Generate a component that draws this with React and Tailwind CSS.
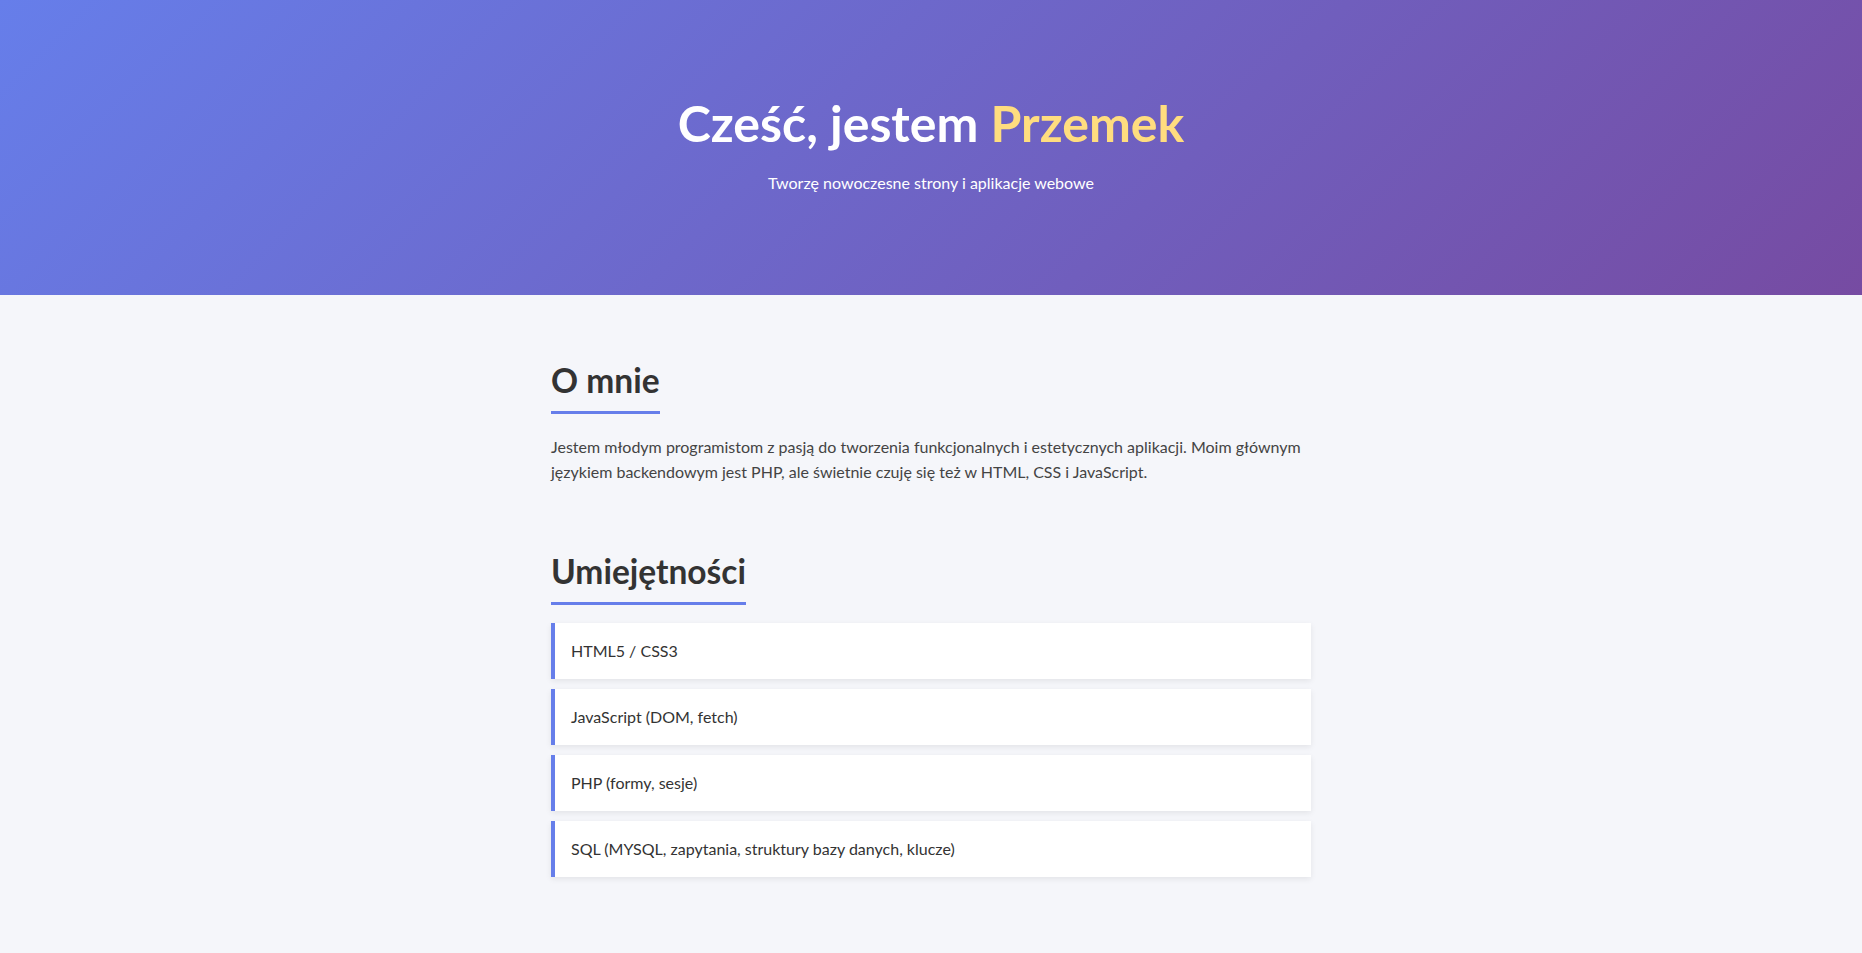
import React from "react";

const skills = [
  "HTML5 / CSS3",
  "JavaScript (DOM, fetch)",
  "PHP (formy, sesje)",
  "SQL (MYSQL, zapytania, struktury bazy danych, klucze)",
];

export default function App() {
  return (
    <div className="min-h-screen bg-[#f5f6fa] font-['Lato','Noto_Sans',sans-serif] text-[#333]">
      {/* Header */}
      <header className="h-[295px] flex flex-col items-center justify-center bg-[linear-gradient(135deg,#667eea_0%,#764ba2_100%)] text-white pb-[8px]">
        <h1 className="text-[50px] font-bold leading-tight">
          Cześć, jestem <span className="text-[#ffdd7f]">Przemek</span>
        </h1>
        <p className="mt-[17px] text-[16px]">Tworzę nowoczesne strony i aplikacje webowe</p>
      </header>

      <main className="max-w-[800px] mx-auto px-5 pt-[65px] pb-16">
        {/* O mnie */}
        <section className="mb-[66px]">
          <h2 className="inline-block text-[33.5px] font-bold leading-tight pb-[9px] border-b-[3px] border-[#667eea]">
            O mnie
          </h2>
          <p className="mt-[20px] text-[16px] leading-[1.6] text-[#444]">
            Jestem młodym programistom z pasją do tworzenia funkcjonalnych i estetycznych aplikacji. Moim głównym
            językiem backendowym jest PHP, ale świetnie czuję się też w HTML, CSS i JavaScript.
          </p>
        </section>

        {/* Umiejętności */}
        <section>
          <h2 className="inline-block text-[33.5px] font-bold leading-tight pb-[9px] border-b-[3px] border-[#667eea]">
            Umiejętności
          </h2>
          <ul className="mt-[18px] flex flex-col gap-[10px]">
            {skills.map((skill) => (
              <li
                key={skill}
                className="bg-white border-l-4 border-[#667eea] px-4 py-4 text-[16px] leading-6 text-[#333] shadow-[0_2px_6px_rgba(0,0,0,0.08)]"
              >
                {skill}
              </li>
            ))}
          </ul>
        </section>
      </main>
    </div>
  );
}
